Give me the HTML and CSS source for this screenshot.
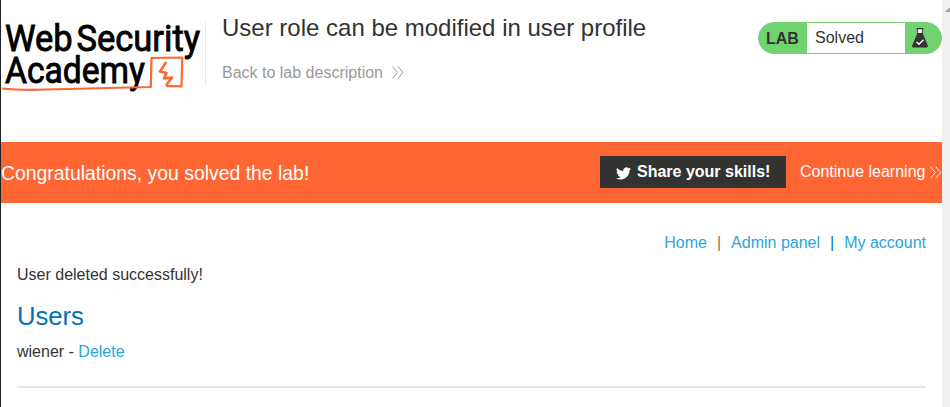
FILE: index.html
```html
<!DOCTYPE html>
<html lang="en">
<head>
<meta charset="utf-8">
<title>User role can be modified in user profile</title>
<link rel="stylesheet" href="styles.css">
</head>
<body>
<div class="window">
<div class="page">
  <header class="header">
    <svg class="logo" width="204" height="100" viewBox="0 0 204 100" role="img">
      <text x="4" y="50.5" textLength="195" lengthAdjust="spacingAndGlyphs" word-spacing="-5">Web Security</text>
      <text x="4" y="83" textLength="140" lengthAdjust="spacingAndGlyphs">Academy</text>
      <path class="mark" d="M1 88.5 C15 90 30 90 45 89.500 L149.800 87 L150.500 58 L181.300 57.500 L180.500 86.300 L165 86"/>
      <path class="mark bolt" d="M165.300 62 L159 71.500 L165.500 73 L163 78.500 L171 77.500 L165 85.500"/>
    </svg>
    <div class="title">
      <h1>User role can be modified in user profile</h1>
      <a class="back">Back to lab description
        <svg class="chev" width="12" height="13" viewBox="0 0 12 13"><path d="M.5 .5l5 6-5 6M6 .5l5 6-5 6"/></svg>
      </a>
    </div>
    <div class="status">
      <span class="lab">LAB</span>
      <span class="solved">Solved</span>
      <span class="flask">
        <svg width="18" height="20" viewBox="0 0 18 20">
          <path fill="#eee" d="M6.500 1h5v5h-5z"/>
          <path fill="#333332" d="M5.500 0h7v1.200h-7zM6 1h.8v4h4.400V1h.8v5L16.800 17.500Q17.500 19.500 15.500 19.500H2.500Q.5 19.500 1.200 17.500L6 6z"/>
          <path fill="none" stroke="#fff" stroke-width="1.300" d="M5.500 14l2.500 2.300 4.500-4.500"/>
        </svg>
      </span>
    </div>
  </header>
  <section class="banner">
    <p>Congratulations, you solved the lab!</p>
    <a class="share">
      <svg width="15" height="13" viewBox="0 0 24 20"><path fill="#fff" d="M24 2.400a10 10 0 0 1-2.800.8A5 5 0 0 0 23.300.5a10 10 0 0 1-3.100 1.200A4.900 4.900 0 0 0 11.800 6.200 14 14 0 0 1 1.700 1a4.900 4.900 0 0 0 1.500 6.600A5 5 0 0 1 1 7a4.900 4.900 0 0 0 3.900 4.900 5 5 0 0 1-2.200.1 4.900 4.900 0 0 0 4.600 3.400A9.900 9.900 0 0 1 0 17.400 14 14 0 0 0 21.500 5 10 10 0 0 0 24 2.400z"/></svg>
      <span>Share your skills!</span>
    </a>
    <a class="continue">Continue learning
      <svg class="chev" width="12" height="13" viewBox="0 0 12 13"><path d="M.5 .5l5 6-5 6M6 .5l5 6-5 6"/></svg>
    </a>
  </section>
  <main class="content">
    <nav class="nav"><a>Home</a><i class="sep-warm">|</i><a>Admin panel</a><i>|</i><a>My account</a></nav>
    <p class="message">User deleted successfully!</p>
    <h2>Users</h2>
    <p class="user">wiener - <a>Delete</a></p>
    <hr>
  </main>
</div>
<div class="scrollbar"><svg width="5" height="4" viewBox="0 0 5 4"><path fill="#a3a3a3" d="M0 4L4 0h1v4z"/></svg></div>
</div>
</body>
</html>
```
FILE: styles.css
```css
* { box-sizing: border-box; }
body {
  margin: 0;
  background: #fff;
  color: #333332;
  font: 16px/20px "Liberation Sans", Arial, sans-serif;
}
h1, h2, p { margin: 0; font-weight: 400; }
.window {
  display: flex;
  height: 407px;
  overflow: hidden;
  border-left: 1px solid #222226;
}
.page { width: 941px; }
.header { display: flex; height: 142px; }
.logo { display: block; flex: none; overflow: visible; }
.logo text { font: 400 37.5px Roboto, sans-serif; fill: #000; stroke: #000; stroke-width: .9; }
.mark { fill: none; stroke: #ff6633; stroke-width: 2.2; stroke-linejoin: round; }
.bolt { stroke-width: 2.6; }
.title {
  height: 62px;
  margin-top: 22px;
  padding-left: 16px;
  border-left: 1px solid #e5e5e5;
  flex: 1;
}
h1 { font-size: 24px; line-height: 28px; margin-top: -8px; white-space: nowrap; }
.back { display: flex; align-items: center; gap: 9px; margin-top: 21px; color: #999; }
.back .chev { margin-top: -2px; }
.chev { fill: none; stroke: currentColor; stroke-width: 1; }
.status {
  display: flex;
  width: 184px;
  height: 32px;
  margin-top: 22px;
  border: 1px solid #70d36f;
  border-radius: 16px;
  background: #70d36f;
  line-height: 30px;
  overflow: hidden;
}
.lab { width: 48px; padding-left: 7px; font-weight: 700; line-height: 31px; }
.solved { width: 98px; padding-left: 8px; background: #fff; }
.flask { flex: 1; padding: 5px 0 0 6px; line-height: 0; }
.banner {
  display: flex;
  align-items: center;
  height: 61px;
  background: #ff6633;
  color: #fff;
}
.banner p { flex: 1; font-size: 19.4px; }
.share {
  display: flex;
  align-items: center;
  gap: 6px;
  width: 186px;
  height: 32px;
  padding-left: 16px;
  margin: 0 14px 1px 0;
  background: #333332;
  font-weight: 700;
}
.share svg { margin-top: 2px; }
.continue { display: flex; align-items: center; gap: 5px; width: 142px; margin-bottom: 1px; white-space: nowrap; }
.content { padding: 30px 16px 0; }
.nav { display: flex; justify-content: flex-end; gap: 10px; }
.nav i { font-style: normal; color: #0071bc; }
.nav .sep-warm { color: #8a765a; }
.nav a, .user a { color: #29a5e5; }
.message { margin-top: 12px; }
h2 { margin-top: 16px; color: #0071bc; font-size: 25.6px; line-height: 30px; }
.user { margin-top: 11px; }
hr { height: 2px; margin: 24px 0 0; border: 0; background: #e5e5e5; }
.scrollbar { width: 8px; background: #f0f0f0; padding: 7px 0 0 3px; line-height: 0; }
```
